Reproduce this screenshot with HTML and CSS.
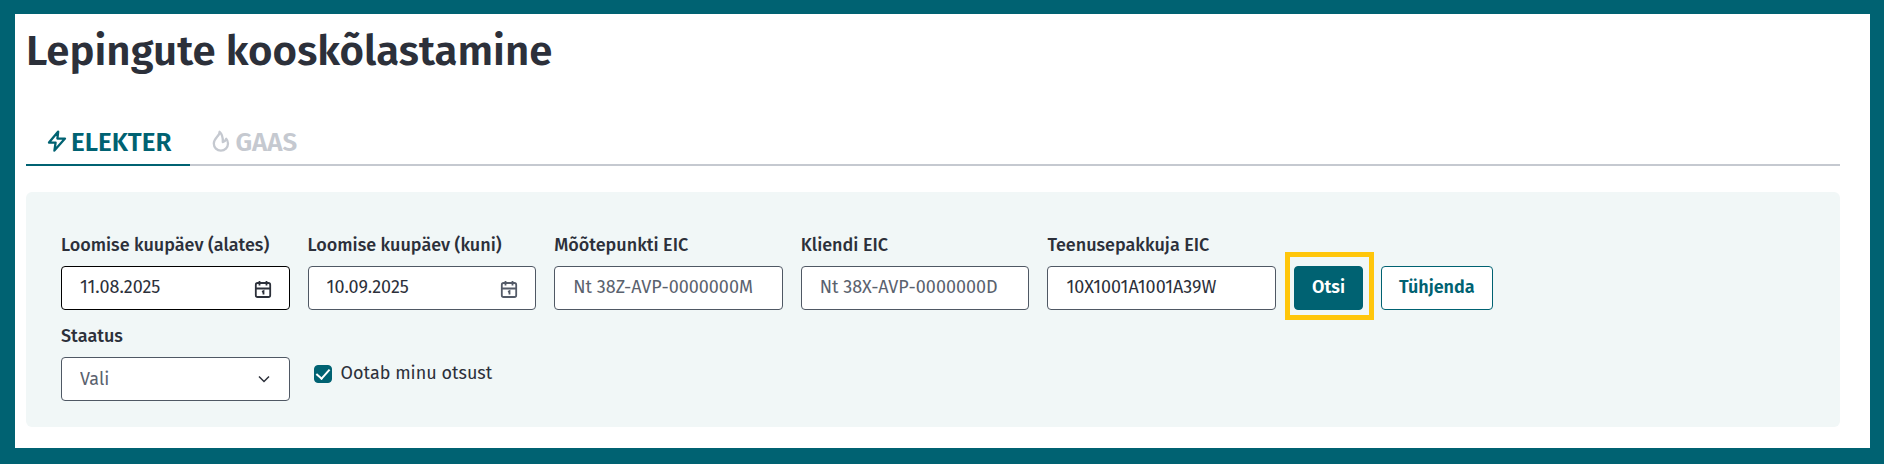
FILE: index.html
```html
<!DOCTYPE html>
<html lang="et">
<head>
<meta charset="utf-8">
<title>Lepingute kooskõlastamine</title>
<link rel="stylesheet" href="styles.css">
</head>
<body>
<main class="page">
  <h1 class="title">Lepingute kooskõlastamine</h1>

  <nav class="tabs">
    <a class="tab tab-active" href="#elekter" aria-current="page">
      <svg class="tab-icon" viewBox="0 0 20 22" aria-hidden="true"><path d="M11.2 1.6 2 12.6h6.6l-1.2 8L18 8.6h-7.6z"/></svg>
      ELEKTER
    </a>
    <a class="tab" href="#gaas">
      <svg class="tab-icon" viewBox="0 0 20 22" aria-hidden="true"><path d="M8.600 1.800C9 5.800 2.800 8 2.800 13.600a7.100 7.100 0 0 0 14.200 0c0-2.200-.6-3.600-1.800-4.800-.5 1.800-1.600 2.900-3.400 3.200C12 7.800 11.200 4 8.600 1.800z"/></svg>
      GAAS
    </a>
  </nav>

  <form class="filter">
    <div class="fields">
      <div class="field">
        <label class="label" for="from">Loomise kuupäev (alates)</label>
        <div class="control">
          <input class="input input-focus" id="from" type="text" value="11.08.2025">
          <svg class="calendar calendar-dark" viewBox="0 0 18 18" aria-hidden="true"><rect x="1.800" y="3" width="14.400" height="14" rx="1.800"/><path d="M1.800 8.500h14.400M5.500 1v4.500M12.500 1v4.500M8 11.800l1.500-.6v3.300"/></svg>
        </div>
      </div>
      <div class="field">
        <label class="label" for="to">Loomise kuupäev (kuni)</label>
        <div class="control">
          <input class="input" id="to" type="text" value="10.09.2025">
          <svg class="calendar" viewBox="0 0 18 18" aria-hidden="true"><rect x="1.800" y="3" width="14.400" height="14" rx="1.800"/><path d="M1.800 8.500h14.400M5.500 1v4.500M12.500 1v4.500M8 11.800l1.500-.6v3.300"/></svg>
        </div>
      </div>
      <div class="field">
        <label class="label" for="meter">Mõõtepunkti EIC</label>
        <input class="input" id="meter" type="text" placeholder="Nt 38Z-AVP-0000000M">
      </div>
      <div class="field">
        <label class="label" for="client">Kliendi EIC</label>
        <input class="input" id="client" type="text" placeholder="Nt 38X-AVP-0000000D">
      </div>
      <div class="field">
        <label class="label" for="provider">Teenusepakkuja EIC</label>
        <input class="input" id="provider" type="text" value="10X1001A1001A39W">
      </div>
      <div class="field">
        <label class="label" for="status">Staatus</label>
        <div class="control">
          <select class="input select" id="status"><option>Vali</option></select>
          <svg class="chevron" viewBox="0 0 12 8" aria-hidden="true"><path d="M1 1.500 6 6.500l5-5"/></svg>
        </div>
      </div>
      <div class="check">
        <input class="checkbox" id="mine" type="checkbox" checked>
        <label class="check-label" for="mine">Ootab minu otsust</label>
      </div>
    </div>
    <div class="actions">
      <div class="highlight"><button class="button button-primary" type="button">Otsi</button></div>
      <button class="button" type="button">Tühjenda</button>
    </div>
  </form>
</main>
</body>
</html>
```
FILE: styles.css
```css
* {
  box-sizing: border-box;
}

body {
  margin: 0;
  min-height: 100vh;
  display: flex;
  padding: 14px 14px 16px 15px;
  background: #006272;
  color: #2c303a;
  font: 400 18px/24px "Fira Sans", Lato, Roboto, sans-serif;
}

.page {
  flex: 1;
  min-width: 0;
  padding: 12px 30px 20px 11px;
  background: #fff;
}

.title {
  margin: 0;
  font-size: 42px;
  line-height: 50px;
  font-weight: 600;
}

.tabs {
  display: flex;
  margin-top: 46px;
  border-bottom: 2px solid #c5c9d0;
}

.tab {
  display: flex;
  gap: 4px;
  margin-bottom: -2px;
  padding: 5px 19px 5px 21px;
  border-bottom: 2px solid transparent;
  color: #c5c9d0;
  font-size: 26px;
  line-height: 32px;
  font-weight: 600;
  text-decoration: none;
}

.tab-active {
  border-color: #006272;
  color: #006272;
}

.tab-icon {
  width: 20px;
  height: 22px;
  margin-top: 3px;
  fill: none;
  stroke: currentColor;
  stroke-width: 2.3;
  stroke-linejoin: round;
}

.filter {
  display: flex;
  gap: 18px;
  margin-top: 26px;
  padding: 41px 35px 26px;
  border-radius: 6px;
  background: #f1f7f7;
}

.fields {
  flex: 0 1 1215px;
  display: grid;
  grid-template-columns: repeat(5, minmax(0, 1fr));
  gap: 14px 18px;
}

.field {
  display: flex;
  flex-direction: column;
  gap: 9px;
}

.label {
  font-weight: 500;
  white-space: nowrap;
}

.control {
  position: relative;
}

.input {
  display: block;
  width: 100%;
  height: 44px;
  margin: 0;
  padding: 0 18px 2px;
  border: 1px solid #4f5864;
  border-radius: 4px;
  background: #fff;
  color: #2c303a;
  font: inherit;
}

.input-focus {
  border-color: #000;
}

.input::placeholder {
  color: #5a626e;
  opacity: 1;
}

.select {
  appearance: none;
  padding-bottom: 0;
  color: #5a626e;
}

.calendar,
.chevron {
  position: absolute;
  pointer-events: none;
  fill: none;
  stroke: #545b68;
}

.calendar {
  top: 14px;
  right: 18px;
  width: 18px;
  height: 18px;
  stroke-width: 1.8;
}

.calendar-dark {
  stroke: #2c303a;
}

.chevron {
  top: 18px;
  right: 20px;
  width: 12px;
  height: 8px;
  stroke: #2c303a;
  stroke-width: 1.5;
}

.check {
  display: flex;
  align-items: flex-start;
  gap: 9px;
  padding: 37px 0 0 6px;
}

.checkbox {
  appearance: none;
  width: 18px;
  height: 18px;
  margin: 4px 0 0;
  border: 1px solid #006272;
  border-radius: 4px;
  background: #fff;
}

.checkbox:checked {
  display: grid;
  place-items: center;
  background: #006272;
}

.checkbox:checked::before {
  content: "";
  width: 6px;
  height: 11px;
  margin-bottom: 3px;
  border: solid #fff;
  border-width: 0 2px 2px 0;
  rotate: 42deg;
}

.actions {
  display: flex;
  align-items: flex-start;
  gap: 18px;
  padding-top: 33px;
}

.button {
  height: 44px;
  padding: 0 17px 2px;
  border: 1px solid #006272;
  border-radius: 4px;
  background: #fff;
  color: #006272;
  font: inherit;
  font-weight: 600;
}

.button-primary {
  background: #006272;
  color: #fff;
}

.highlight {
  position: relative;
}

.highlight::after {
  content: "";
  position: absolute;
  inset: -14px -11px -10px -9px;
  border: 5px solid #ffc60b;
  pointer-events: none;
}
```
